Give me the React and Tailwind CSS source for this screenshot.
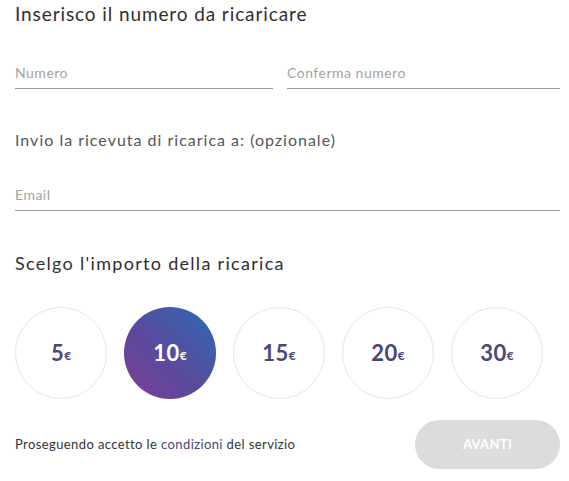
import { useState } from "react";

const amounts = [5, 10, 15, 20, 30];

const UnderlineInput = ({ placeholder, type = "text" }) => (
  <input
    type={type}
    placeholder={placeholder}
    className="w-full border-b border-[#9a9a9a] bg-transparent pb-[5px] text-[14px] tracking-[0.5px] text-[#333] outline-none placeholder:text-[#a3a3a3]"
  />
);

export default function App() {
  const [selected, setSelected] = useState(10);

  return (
    <main className="min-h-screen w-[569px] bg-white pl-[15px] pr-[9px] pt-[1px] font-['Lato',sans-serif] text-[#333]">
      <h1 className="text-[19px] leading-[26px] tracking-[0.9px] text-[#2f2f2f]">Inserisco il numero da ricaricare</h1>

      <div className="mt-[35px] grid grid-cols-[258px_1fr] gap-[14px]">
        <UnderlineInput placeholder="Numero" />
        <UnderlineInput placeholder="Conferma numero" />
      </div>

      <p className="mt-[40px] text-[16px] leading-[22px] tracking-[1px] text-[#555]">Invio la ricevuta di ricarica a: (opzionale)</p>

      <div className="mt-[31px]">
        <UnderlineInput placeholder="Email" type="email" />
      </div>

      <h2 className="mt-[40px] text-[18px] leading-[24px] tracking-[1.3px] text-[#2f2f2f]">Scelgo l'importo della ricarica</h2>

      <div className="mt-[32px] flex gap-[17px]">
        {amounts.map((value) => {
          const active = value === selected;
          return (
            <button
              key={value}
              type="button"
              onClick={() => setSelected(value)}
              className={
                active
                  ? "flex h-[92px] w-[92px] items-center justify-center rounded-full bg-[linear-gradient(225deg,#2a6cb3_0%,#5a4a9c_55%,#7a3e96_100%)] text-white"
                  : "flex h-[92px] w-[92px] items-center justify-center rounded-full border border-[#e6e6ea] bg-white text-[#4b4776]"
              }
            >
              <span className="text-[22px] font-bold leading-none tracking-[0.5px]">{value}</span>
              <span className="mt-[5px] text-[12px] font-bold leading-none">€</span>
            </button>
          );
        })}
      </div>

      <div className="mt-[21px] flex items-center justify-between">
        <p className="text-[13px] tracking-[0.4px] text-[#333]">
          Proseguendo accetto le <span className="text-[#4b4776]">condizioni</span> del servizio
        </p>
        <button
          type="button"
          disabled
          className="h-[49px] w-[145px] rounded-full bg-[#dcdcdc] text-[13px] font-bold tracking-wide text-white"
        >
          AVANTI
        </button>
      </div>
    </main>
  );
}
